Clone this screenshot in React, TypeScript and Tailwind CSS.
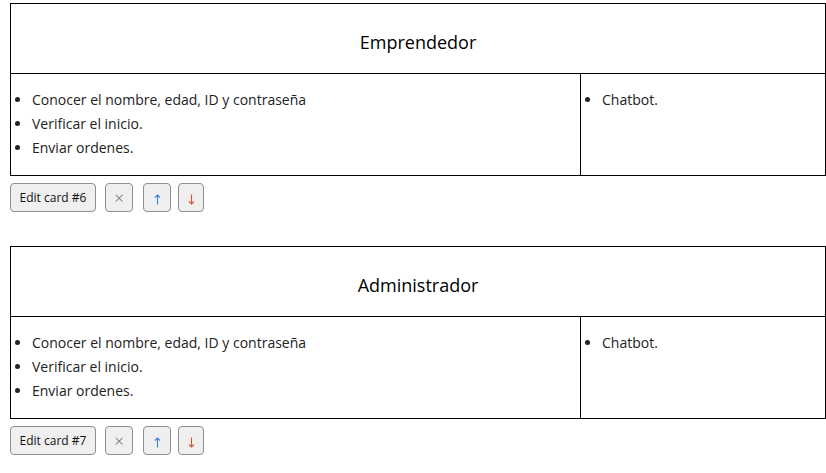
const cards = [
  {
    id: 6,
    title: "Emprendedor",
    left: [
      "Conocer el nombre, edad, ID y contraseña",
      "Verificar el inicio.",
      "Enviar ordenes.",
    ],
    right: ["Chatbot."],
  },
  {
    id: 7,
    title: "Administrador",
    left: [
      "Conocer el nombre, edad, ID y contraseña",
      "Verificar el inicio.",
      "Enviar ordenes.",
    ],
    right: ["Chatbot."],
  },
];

const btn =
  "h-[29px] rounded-[4px] border border-[#8f8f8f] bg-[#efefef] text-[12px] text-[#111] flex items-center justify-center";

const Arrow = ({ up, color }: { up?: boolean; color: string }) => (
  <svg width="7" height="11" viewBox="0 0 7 11" className={up ? "mt-[3px]" : "mt-[3px] rotate-180"}>
    <path d="M3.5 1 V10.5 M1 3.5 L3.5 1 L6 3.5" fill="none" stroke={color} strokeWidth="1.1" />
  </svg>
);

const Card = ({ card }: { card: (typeof cards)[number] }) => (
  <div>
    <div className="w-[816px] border border-black">
      <div className="h-[70px] flex items-center justify-center pt-[8px] border-b border-black text-[18px] font-medium text-black">
        {card.title}
      </div>
      <div className="flex h-[101px]">
        <div className="w-[570px] border-r border-black">
          <ul className="list-disc pl-[21px] mt-[14px] text-[14px] leading-[24px] text-[#222]">
            {card.left.map((item) => (
              <li key={item}>{item}</li>
            ))}
          </ul>
        </div>
        <div className="flex-1">
          <ul className="list-disc pl-[21px] mt-[14px] text-[14px] leading-[24px] text-[#222]">
            {card.right.map((item) => (
              <li key={item}>{item}</li>
            ))}
          </ul>
        </div>
      </div>
    </div>
    <div className="flex mt-[7px]">
      <button className={`${btn} w-[86px]`}>Edit card #{card.id}</button>
      <button className={`${btn} w-[28px] ml-[9px] text-[17px] font-light text-[#666]`}>×</button>
      <button className={`${btn} w-[28px] ml-[10px]`}>
        <Arrow up color="#3d7fe0" />
      </button>
      <button className={`${btn} w-[26px] ml-[7px]`}>
        <Arrow color="#d9532c" />
      </button>
    </div>
  </div>
);

export default function App() {
  return (
    <div className="pl-[10px] pt-[3px] flex flex-col gap-[34px] bg-white font-['Open_Sans',sans-serif]">
      {cards.map((c) => (
        <Card key={c.id} card={c} />
      ))}
    </div>
  );
}
